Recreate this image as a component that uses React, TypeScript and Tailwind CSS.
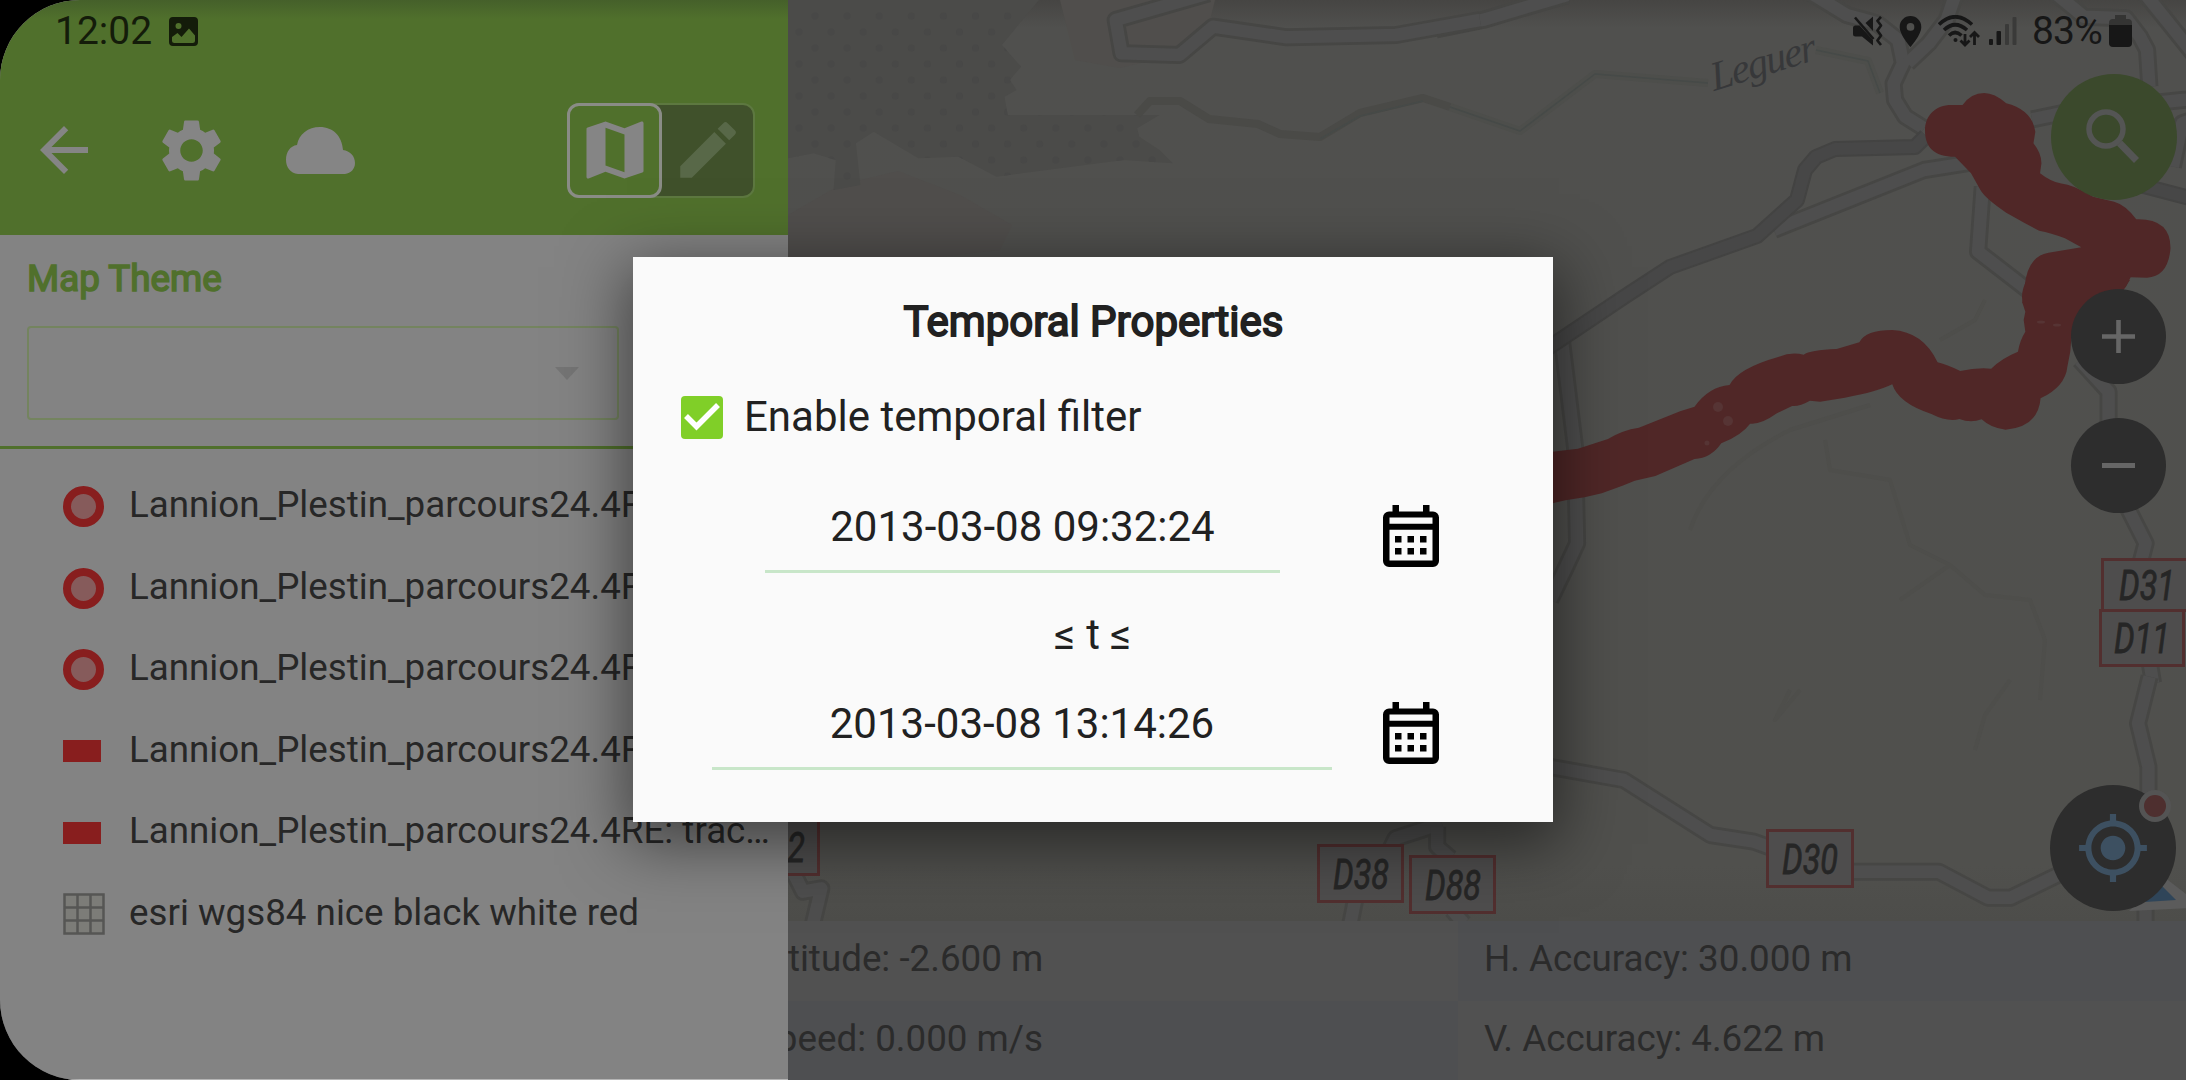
import { MdArrowBack, MdSettings, MdEdit, MdMyLocation, MdLocationOn } from "react-icons/md";

const seaDots: number[][] = [];
for (let r = 0; r < 12; r++) for (let c = 0; c < 13; c++) seaDots.push([799 + c * 32.1 + (r % 2 ? 0 : 16), 16 + r * 16]);

const roadGroups = [
  {
    t: "translate(1450 0) scale(.4694 .3333)",
    wide: [
      "M-30 88L0 80 70 60 250 -15",
      "M770 -20L845 45 910 70 955 120 965 190 945 250 948 300 970 350 1010 385",
      "M1075 -10L1058 60 1020 130 975 190",
      "M1110 488L1010 510 690 690",
      "M1135 560L1125 755 1240 880",
      "M1240 358L1320 335 1560 300 1600 296",
      "M1290 -20L1350 50 1440 55 1470 110 1485 150 1490 260",
      "M1480 -20L1600 190",
      "M1540 500L1560 370 1600 350",
    ],
  },
  {
    t: "translate(780 0) scale(.4464 .3333)",
    wide: ["M960 -20L752 60 765 160 895 165 970 80 1135 112 1380 105 1568 60"],
  },
  {
    t: "translate(1540 280) scale(.412 .3333)",
    wide: [
      "M53 180L85 500 90 790 60 870 25 960",
      "M1310 240L1380 335 1380 440",
      "M1425 680L1470 790 1455 860",
      "M1480 1150L1488 1210",
    ],
  },
  {
    t: "translate(1280 680) scale(.5778 .3333)",
    wide: [
      "M440 250L472 262 595 300 745 465 820 485 860 510",
      "M980 575L1140 575 1225 653 1265 653 1400 540",
      "M1505 -10L1485 130 1503 260 1503 350",
      "M1498 680L1498 730",
      "M190 510L200 475 280 430",
      "M272 440L272 500 295 535",
      "M130 660L122 730",
      "M298 690L318 730",
    ],
  },
  {
    t: "translate(780 800) scale(.4592 .3333)",
    wide: ["M30 220L50 275 90 265 72 370"],
  },
];

function MapCanvas() {
  return (
    <svg className="absolute inset-0" width="2186" height="921" viewBox="0 0 2186 921">
      <defs>
        <linearGradient id="land" x1="0" y1="0" x2="0" y2="1">
          <stop offset="0" stopColor="#464543" />
          <stop offset="0.03" stopColor="#50504e" />
          <stop offset="0.94" stopColor="#50504d" />
          <stop offset="1" stopColor="#4d4d4a" />
        </linearGradient>
        <clipPath id="seaClip">
          <path transform="translate(780 0) scale(.4464 .3333)" d="M18 0H580L497 135 540 200 515 240 530 270 503 290 510 345H850L800 385 805 410 850 450 880 490 770 480 485 530 400 470 310 475 210 395 170 430 180 555 120 570 125 480 75 460 18 475Z" />
        </clipPath>
      </defs>
      <rect width="2186" height="921" fill="url(#land)" />
      <path d="M788 215L840 185 898 171 960 195 1012 225 1000 250 940 257H788Z" fill="#504e4c" />
      <path d="M1060 0L1075 60 1120 68 1175 55 1210 20 1215 0Z" fill="#504e4c" />
      <g clipPath="url(#seaClip)">
        <rect x="780" width="420" height="200" fill="#4b4b49" />
        {seaDots.map(([x, y], i) => (
          <circle key={i} cx={x} cy={y} r="3.5" fill="#484847" />
        ))}
      </g>
      <g fill="none" strokeLinejoin="round">
        <path d="M1137 115L1150 101 1180 101 1209 119 1258 124 1280 134 1320 137 1360 113 1423 98 1450 107" stroke="#4a4a47" strokeWidth="8" />
        <path d="M1450 107L1520 131 1595 74 1708 83M1816 50L1868 61 1880 93" stroke="#4d4e4b" strokeWidth="8" />
        <path d="M1450 107L1520 131 1595 74 1708 83M1816 50L1868 61 1880 93M1320 139L1360 116 1423 101" stroke="#464a48" strokeWidth="1.5" />
        <path d="M1690 530Q1710 470 1790 430L1870 405M1825 440L1830 470 1890 480 1910 545 1950 565 1900 600M1950 565L1985 595 2030 600 2045 640 2040 700M1940 340L1975 320 1985 300M1790 690L1775 720 1800 690M1975 750L1985 715 2010 680" stroke="#4e4e4b" strokeWidth="4" />
      </g>
      {roadGroups.map((g) => (
        <g key={g.t} transform={g.t} fill="none" strokeLinejoin="round">
          {g.wide.map((d) => (
            <path key={d} d={d} stroke="#464644" strokeWidth="18" vectorEffect="non-scaling-stroke" />
          ))}
          {g.wide.map((d) => (
            <path key={d + "f"} d={d} stroke="#4e4e4e" strokeWidth="12.5" vectorEffect="non-scaling-stroke" />
          ))}
        </g>
      ))}
      <g fill="none" strokeLinejoin="round">
        <path d="M1926 136L1915 147 1835 149 1816 157 1805 170 1797 200 1757 236 1670 267 1624 297 1545 350M2140 185L2190 198" stroke="#434342" strokeWidth="16" />
        <path d="M1926 136L1915 147 1835 149 1816 157 1805 170 1797 200 1757 236 1670 267 1624 297 1545 350M2140 185L2190 198" stroke="#474747" strokeWidth="12" />
      </g>
      <g fill="#502727">
        <path transform="translate(1450 0) scale(.4694 .3333)" d="M1012 392C1012 345 1035 315 1068 315L1092 315Q1110 279 1138 279 1160 279 1185 310 1240 330 1247 395L1243 430Q1260 460 1260 490L1257 520Q1280 545 1300 550 1330 555 1370 590L1415 605Q1440 615 1462 658 1535 655 1535 745 1530 830 1485 833L1450 832 1440 860 1420 890 1400 910 1219 910 1224 860Q1230 770 1275 758L1345 742 1310 715Q1280 698 1255 692L1225 670 1185 638Q1140 595 1130 570L1110 520 1076 470C1030 470 1012 440 1012 392Z" />
        <path transform="translate(1540 280) scale(.412 .3333)" d="M1182 0H1432L1400 60 1290 170 1287 215 1280 260Q1275 320 1215 355 1210 440 1130 449 1095 445 1072 418 1045 430 1018 417 990 427 950 402 870 370 855 313 820 335 740 353L680 365 655 362Q630 380 612 378L575 400Q535 435 510 431 490 465 440 490 415 535 375 537L280 588 230 602 200 617 150 640 108 652Q60 660 20 673V517L92 506 165 477Q200 450 240 443L340 394 375 380Q410 320 460 315 480 265 580 230 610 215 640 224 655 210 720 207L775 187Q790 150 855 150 930 155 965 247 990 255 1020 273 1060 262 1095 266 1120 235 1160 215 1165 180 1178 155L1174 120 1178 95Q1160 45 1182 0Z" />
      </g>
      <g fill="#563434">
        <circle cx="1718" cy="407" r="5" />
        <circle cx="1728" cy="421" r="5" />
        <circle cx="1707" cy="443" r="2.500" />
        <ellipse cx="2041" cy="322" rx="4" ry="1.500" />
        <ellipse cx="2057" cy="325" rx="4" ry="1.500" />
      </g>
      <path d="M2164 877L2190 897V908L2129 911Z" fill="#5b5b5b" />
      <path d="M2160 884L2176 900 2145 902Z" fill="#2f4559" />
      <text transform="translate(1714 91) rotate(-17) skewX(-4)" fontFamily="Liberation Serif" fontStyle="italic" fontSize="41" textLength="109" lengthAdjust="spacing" fill="#37383a">Leguer</text>
    </svg>
  );
}

function RoadSign({ label, box }: { label: string; box: string }) {
  return (
    <div className={`absolute flex items-center justify-center border-[3px] border-[#522f2f] bg-[#4e4d4d] ${box}`}>
      <svg width="58" height="36" viewBox="0 0 58 36" className="shrink-0">
        <text x="1" y="33" fontFamily="Roboto" fontStyle="italic" fontSize="42" textLength="56" lengthAdjust="spacingAndGlyphs" fill="#262626" stroke="#262626" strokeWidth="0.8">{label}</text>
      </svg>
    </div>
  );
}

function CalendarIcon() {
  return (
    <svg width="56" height="62" viewBox="0 0 56 62">
      <path fillRule="evenodd" d="M9.500 0h6.500v6.500h24V0h6.500v6.500h3.500a6 6 0 0 1 6 6V56a6 6 0 0 1-6 6H6a6 6 0 0 1-6-6V12.500a6 6 0 0 1 6-6h3.500zM6.500 12.500v6.300h43v-6.300zM6.500 24.800v30.700h43V24.800z" />
      {[12, 24.500, 37].map((x) => (
        <g key={x}>
          <rect x={x} y="31" width="6.500" height="6.500" />
          <rect x={x} y="43" width="6.500" height="6.500" />
        </g>
      ))}
    </svg>
  );
}

function StatusBar() {
  return (
    <div className="absolute inset-x-0 top-0 flex h-[62px] justify-between pl-[55px] pr-[54px] text-[39px] font-normal leading-[62px]">
      <div className="flex items-center gap-[17px] text-[#141c0a]">
        <span className="text-[39px]">12:02</span>
        <svg width="29" height="29" viewBox="0 0 29 29" className="mt-px">
          <path fillRule="evenodd" fill="currentColor" d="M4 0h21a4 4 0 0 1 4 4v21a4 4 0 0 1-4 4H4a4 4 0 0 1-4-4V4a4 4 0 0 1 4-4zM9.500 6a3 3 0 1 0 0 6 3 3 0 0 0 0-6zM3 20v3.500a2.500 2.500 0 0 0 2.500 2.500h18a2.500 2.500 0 0 0 2.500-2.500V18.500l-6-7-7.500 8.500-4-4z" />
        </svg>
      </div>
      <div className="flex items-center text-[#171717]">
        <svg width="30" height="30" viewBox="0 0 30 30" fill="none" stroke="currentColor" strokeLinejoin="round">
          <path d="M2.500 9.500h4L20 24v5.500L9 20.500H2.500Q0 20.500 0 18v-6Q0 9.500 2.500 9.500zM20 .5V15L12.500 7z" fill="currentColor" stroke="none" />
          <path d="M2 1.500l18.500 21.500" strokeWidth="2.600" />
          <path d="M28 .8l-3.600 4 3.600 4.700-3.600 5 3.600 5-3.600 5 3.600 4.500" strokeWidth="2.600" />
        </svg>
        <MdLocationOn className="ml-[9px] size-[37px]" />
        <svg className="ml-[9px]" width="42" height="32" viewBox="0 0 42 32" fill="none" stroke="currentColor" strokeWidth="3.600">
          <path d="M1 9.500Q17-6 34 9.500M6 15Q17 4.500 29 15M11 20.500Q17 14.500 23.500 20.500" />
          <path d="M27 19v11M22.500 25.500l4.500 4.500 4.500-4.500M36.500 30V18M32 22l4.500-4.500L41 22" strokeWidth="2.800" />
          <circle cx="17.500" cy="25" r="2" fill="currentColor" stroke="none" />
        </svg>
        <svg className="ml-[9px]" width="28" height="30" viewBox="0 0 28 30" fill="currentColor">
          <rect y="23" width="4" height="6" rx="1" />
          <rect x="7.500" y="15" width="4.500" height="14" rx="1" />
          <rect x="16" y="8" width="4" height="21" rx="1" fill="#3a3a39" />
          <rect x="23.500" y="1" width="4" height="28" rx="1" fill="#3a3a39" />
        </svg>
        <span className="ml-[15px] inline-block w-[77px] text-[39px] tracking-[-0.800px]">83%</span>
        <svg width="23" height="32" viewBox="0 0 23 32" fill="currentColor">
          <path d="M6 0h11v4h2q4 0 4 4v3H0V8q0-4 4-4h2z" fill="#343433" />
          <path d="M0 10h23v18q0 4-4 4H4q-4 0-4-4z" />
        </svg>
      </div>
    </div>
  );
}

const layers = [
  { kind: "point", name: "Lannion_Plestin_parcours24.4RE: route_points" },
  { kind: "point", name: "Lannion_Plestin_parcours24.4RE: track_points" },
  { kind: "point", name: "Lannion_Plestin_parcours24.4RE: waypoints" },
  { kind: "line", name: "Lannion_Plestin_parcours24.4RE: routes" },
  { kind: "line", name: "Lannion_Plestin_parcours24.4RE: tracks" },
  { kind: "raster", name: "esri wgs84 nice black white red" },
];

function LayerSymbol({ kind }: { kind: string }) {
  if (kind === "point") return <span className="size-[41px] rounded-full border-[8px] border-[#881e1e] bg-[#865b5b]" />;
  if (kind === "line") return <span className="h-[22px] w-[38px] bg-[#881e1e]" />;
  return (
    <svg width="42" height="42" viewBox="0 0 42 42" fill="#7c7c78" stroke="#565654" strokeWidth="2.500">
      <path d="M1.500 1.500h39v39h-39zM14.500 1v40M27.500 1v40M1 14.500h40M1 27.500h40" />
    </svg>
  );
}

function SidePanel() {
  return (
    <div className="absolute inset-y-0 left-0 flex w-[788px] flex-col overflow-hidden border-b border-[#b4b4b4] bg-[#838383]">
      <div className="flex h-[235px] shrink-0 items-center bg-linear-to-b from-[#45602a] via-[#50702c] via-8% to-[#50702c] pl-[28px] pr-[33px] pt-[65px] text-[#858585]">
        <MdArrowBack className="size-[72px]" />
        <MdSettings className="ml-[54px] size-[75px]" />
        <svg className="ml-[57px]" width="69" height="47" viewBox="0 0 69 47" fill="currentColor">
          <path d="M12 47C4 46 0 40 0 33 0 25 4 19 11 18 13 7 22 0 34 0 47 0 56 9 57 23 64 24 69 29 69 36 69 42 65 46 59 47Z" />
        </svg>
        <div className="ml-auto flex h-[95px] w-[188px] rounded-[12px] border-[2px] border-[#5d7840] bg-[#40512b]">
          <div className="-m-[2px] flex h-[95px] w-[95px] items-center justify-center rounded-[12px] border-[3px] border-[#8a8c86] bg-[#50702c]">
            <svg viewBox="0 0 24 24" fill="currentColor" className="size-[76px]">
              <path d="M20.500 3l-.16.03L15 5.100 9 3 3.360 4.900c-.21.07-.36.250-.36.480V20.500c0 .28.22.5.5.5l.16-.03L9 18.900l6 2.100 5.640-1.900c.21-.07.36-.25.36-.48V3.500c0-.28-.22-.5-.5-.5zM15 19l-6-2.110V5l6 2.110V19z" />
            </svg>
          </div>
          <div className="flex flex-1 items-center justify-center pl-[3px] text-[#586848]">
            <MdEdit className="size-[74px]" />
          </div>
        </div>
      </div>
      <div className="flex h-[214px] shrink-0 flex-col border-b-[3px] border-[#50702c] px-[27px]">
        <div className="mt-[21px] h-[46px] whitespace-nowrap text-[36.800px] font-normal leading-[46px] text-[#50702c] [-webkit-text-stroke:1.600px_#50702c]">Map Theme</div>
        <div className="mt-[24px] flex h-[94px] w-[592px] items-center justify-end rounded-[4px] border-[2px] border-[#74845f] pr-[38px]">
          <svg width="24" height="13" viewBox="0 0 24 13">
            <path d="M0 0h24L12 13z" fill="#747474" />
          </svg>
        </div>
      </div>
      <div className="flex flex-col pt-[17px]">
        {layers.map((l) => (
          <div key={l.name} className="flex h-[81.500px] items-center pl-[63px] pr-[16px]">
            <span className="flex w-[66px] shrink-0 items-center">
              <LayerSymbol kind={l.kind} />
            </span>
            <span className="-mt-[3px] truncate text-[36.750px] leading-[48px] text-[#272727]">{l.name}</span>
          </div>
        ))}
      </div>
    </div>
  );
}

function PositionInfo() {
  return (
    <div className="absolute inset-x-0 bottom-0 grid h-[159px] grid-cols-[729px_729px_728px] grid-rows-2 text-[36.750px] leading-[76px] text-[#2b2b2b]">
      <div className="bg-[#4e4f51]" />
      <div className="whitespace-nowrap bg-[#515151] pl-[26px]">Altitude: -2.600 m</div>
      <div className="whitespace-nowrap bg-[#4e4f51] pl-[26px]">H. Accuracy: 30.000 m</div>
      <div className="bg-[#515151]" />
      <div className="whitespace-nowrap bg-[#4e4f51] pl-[26px]">Speed: 0.000 m/s</div>
      <div className="whitespace-nowrap bg-[#515151] pl-[26px]">V. Accuracy: 4.622 m</div>
    </div>
  );
}

function MapButtons() {
  return (
    <>
      <div className="absolute left-[2051px] top-[74px] flex size-[126px] items-center justify-center rounded-full bg-[#3b492c]">
        <svg width="56" height="56" viewBox="0 0 56 56" fill="none" stroke="#545554">
          <circle cx="20" cy="20" r="17" strokeWidth="5.500" />
          <path d="M33.500 34l17 17.500" strokeWidth="7" />
        </svg>
      </div>
      <div className="absolute left-[2071px] top-[289px] flex size-[95px] items-center justify-center rounded-full bg-[#2d2d2d]">
        <svg width="33" height="33" viewBox="0 0 33 33" stroke="#666" strokeWidth="4.600">
          <path d="M0 16.500h33M16.500 0v33" />
        </svg>
      </div>
      <div className="absolute left-[2071px] top-[418px] flex size-[95px] items-center justify-center rounded-full bg-[#2d2d2d]">
        <span className="h-[5px] w-[33px] bg-[#666]" />
      </div>
      <div className="absolute left-[2050px] top-[785px] flex size-[126px] items-center justify-center rounded-full bg-[#2d2d2d] text-[#3d5061]">
        <MdMyLocation className="size-[74px]" />
        <span className="absolute left-[89px] top-[5px] size-[32px] rounded-full border-[5px] border-[#545454] bg-[#4e2f2f]" />
      </div>
    </>
  );
}

function TemporalDialog() {
  return (
    <div className="relative flex h-[565px] w-[920px] flex-col bg-[#fafafa] text-[42px] text-[#212121] shadow-[0_16px_60px_6px_rgba(0,0,0,0.5)]">
      <h1 className="mt-[39px] whitespace-nowrap pl-px text-center text-[42px] font-normal leading-[52px] [-webkit-text-stroke:1.800px_#212121]">Temporal Properties</h1>
      <div className="mt-[43px] flex h-[52px] items-center pl-[48px]">
        <span className="flex h-[43px] w-[42px] items-center justify-center rounded-[4px] bg-[#80cf28]">
          <svg width="36" height="30" viewBox="0 0 36 30" fill="none" stroke="#fff" strokeWidth="5.500">
            <path d="M2 14l10.500 10.500L34 3" />
          </svg>
        </span>
        <span className="ml-[21px] whitespace-nowrap leading-[52px]">Enable temporal filter</span>
      </div>
      <div className="mt-[48px] flex h-[82px]">
        <div className="ml-[132px] w-[515px] border-b-[3px] border-[#c8e6c9] text-center leading-[71px]">2013-03-08 09:32:24</div>
        <div className="ml-[103px] mt-[14px]">
          <CalendarIcon />
        </div>
      </div>
      <div className="mt-[36px] h-[52px] text-center leading-[52px]">≤ t ≤</div>
      <div className="mt-[27px] flex h-[82px]">
        <div className="ml-[79px] w-[620px] border-b-[3px] border-[#c8e6c9] text-center leading-[71px]">2013-03-08 13:14:26</div>
        <div className="ml-[51px] mt-[14px]">
          <CalendarIcon />
        </div>
      </div>
    </div>
  );
}

export default function App() {
  return (
    <div className="relative h-[1080px] w-[2186px] overflow-hidden bg-black font-['Roboto',sans-serif]">
      <div className="absolute inset-0 overflow-hidden rounded-l-[80px]">
        <MapCanvas />
        <RoadSign label="D42" box="left-[733px] top-[817px] h-[59px] w-[87px]" />
        <RoadSign label="D38" box="left-[1317px] top-[844px] h-[59px] w-[87px]" />
        <RoadSign label="D88" box="left-[1409px] top-[855px] h-[59px] w-[87px]" />
        <RoadSign label="D30" box="left-[1766px] top-[829px] h-[59px] w-[88px]" />
        <RoadSign label="D31" box="left-[2101px] top-[558px] h-[54px] w-[92px]" />
        <RoadSign label="D11" box="left-[2099px] top-[609px] h-[58px] w-[86px]" />
        <PositionInfo />
        <MapButtons />
        <SidePanel />
        <StatusBar />
        <div className="flex h-full items-center justify-center pb-px">
          <TemporalDialog />
        </div>
      </div>
    </div>
  );
}
